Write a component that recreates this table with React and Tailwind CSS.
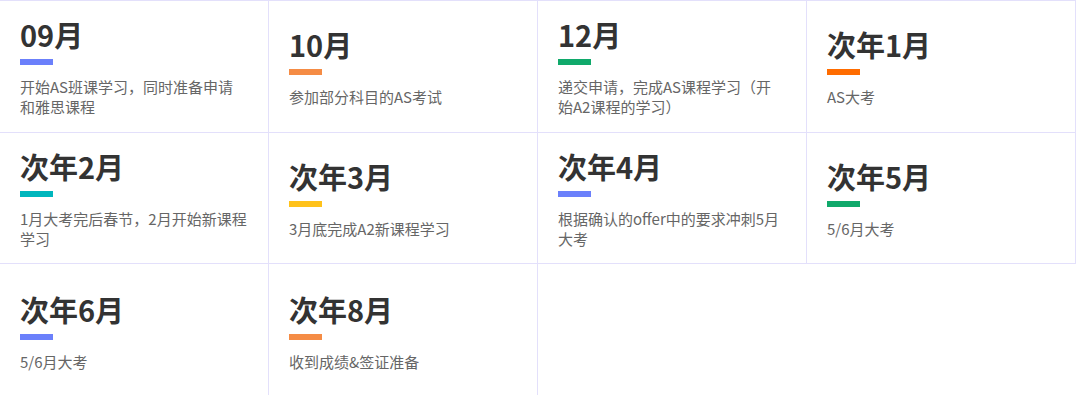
const items = [
  { title: '09月', bar: 'bg-[#6b80fb]', lines: ['开始AS班课学习，同时准备申请', '和雅思课程'] },
  { title: '10月', bar: 'bg-[#f58c45]', lines: ['参加部分科目的AS考试'] },
  { title: '12月', bar: 'bg-[#10a96b]', lines: ['递交申请，完成AS课程学习（开', '始A2课程的学习）'] },
  { title: '次年1月', bar: 'bg-[#ff6c00]', lines: ['AS大考'] },
  { title: '次年2月', bar: 'bg-[#00b6bd]', lines: ['1月大考完后春节，2月开始新课程', '学习'] },
  { title: '次年3月', bar: 'bg-[#ffc21a]', lines: ['3月底完成A2新课程学习'] },
  { title: '次年4月', bar: 'bg-[#6b80fb]', lines: ['根据确认的offer中的要求冲刺5月', '大考'] },
  { title: '次年5月', bar: 'bg-[#10a96b]', lines: ['5/6月大考'] },
  { title: '次年6月', bar: 'bg-[#6b80fb]', lines: ['5/6月大考'] },
  { title: '次年8月', bar: 'bg-[#f58c45]', lines: ['收到成绩&签证准备'] },
];

// fixed breaks so wrapping matches the original column width
const Cell = ({ title, bar, lines }) => (
  <div className="flex h-[131.5px] flex-col justify-center border-r border-b border-[#e3e0fb] pl-5 pr-4 [&:nth-child(n+9)]:h-[134px] [&:nth-child(n+9)]:border-b-0">
    <h3 className="text-[29px] font-bold leading-[38px] text-[#333]">{title}</h3>
    <div className={`mt-[6px] h-[6px] w-[33px] ${bar}`} />
    <p className="mt-[12px] text-[15px] leading-[20px] text-[#666]">
      {lines.map((line) => (
        <span key={line} className="block whitespace-nowrap">
          {line}
        </span>
      ))}
    </p>
  </div>
);

export default function App() {
  return (
    <div className="h-[395px] w-[1080px] overflow-hidden bg-white" style={{ fontFamily: '"Microsoft YaHei", "Noto Sans CJK SC", sans-serif' }}>
      <div className="grid w-[1076px] grid-cols-4 border-t border-[#e3e0fb]">
        {items.map((item) => (
          <Cell key={item.title} {...item} />
        ))}
      </div>
    </div>
  );
}
